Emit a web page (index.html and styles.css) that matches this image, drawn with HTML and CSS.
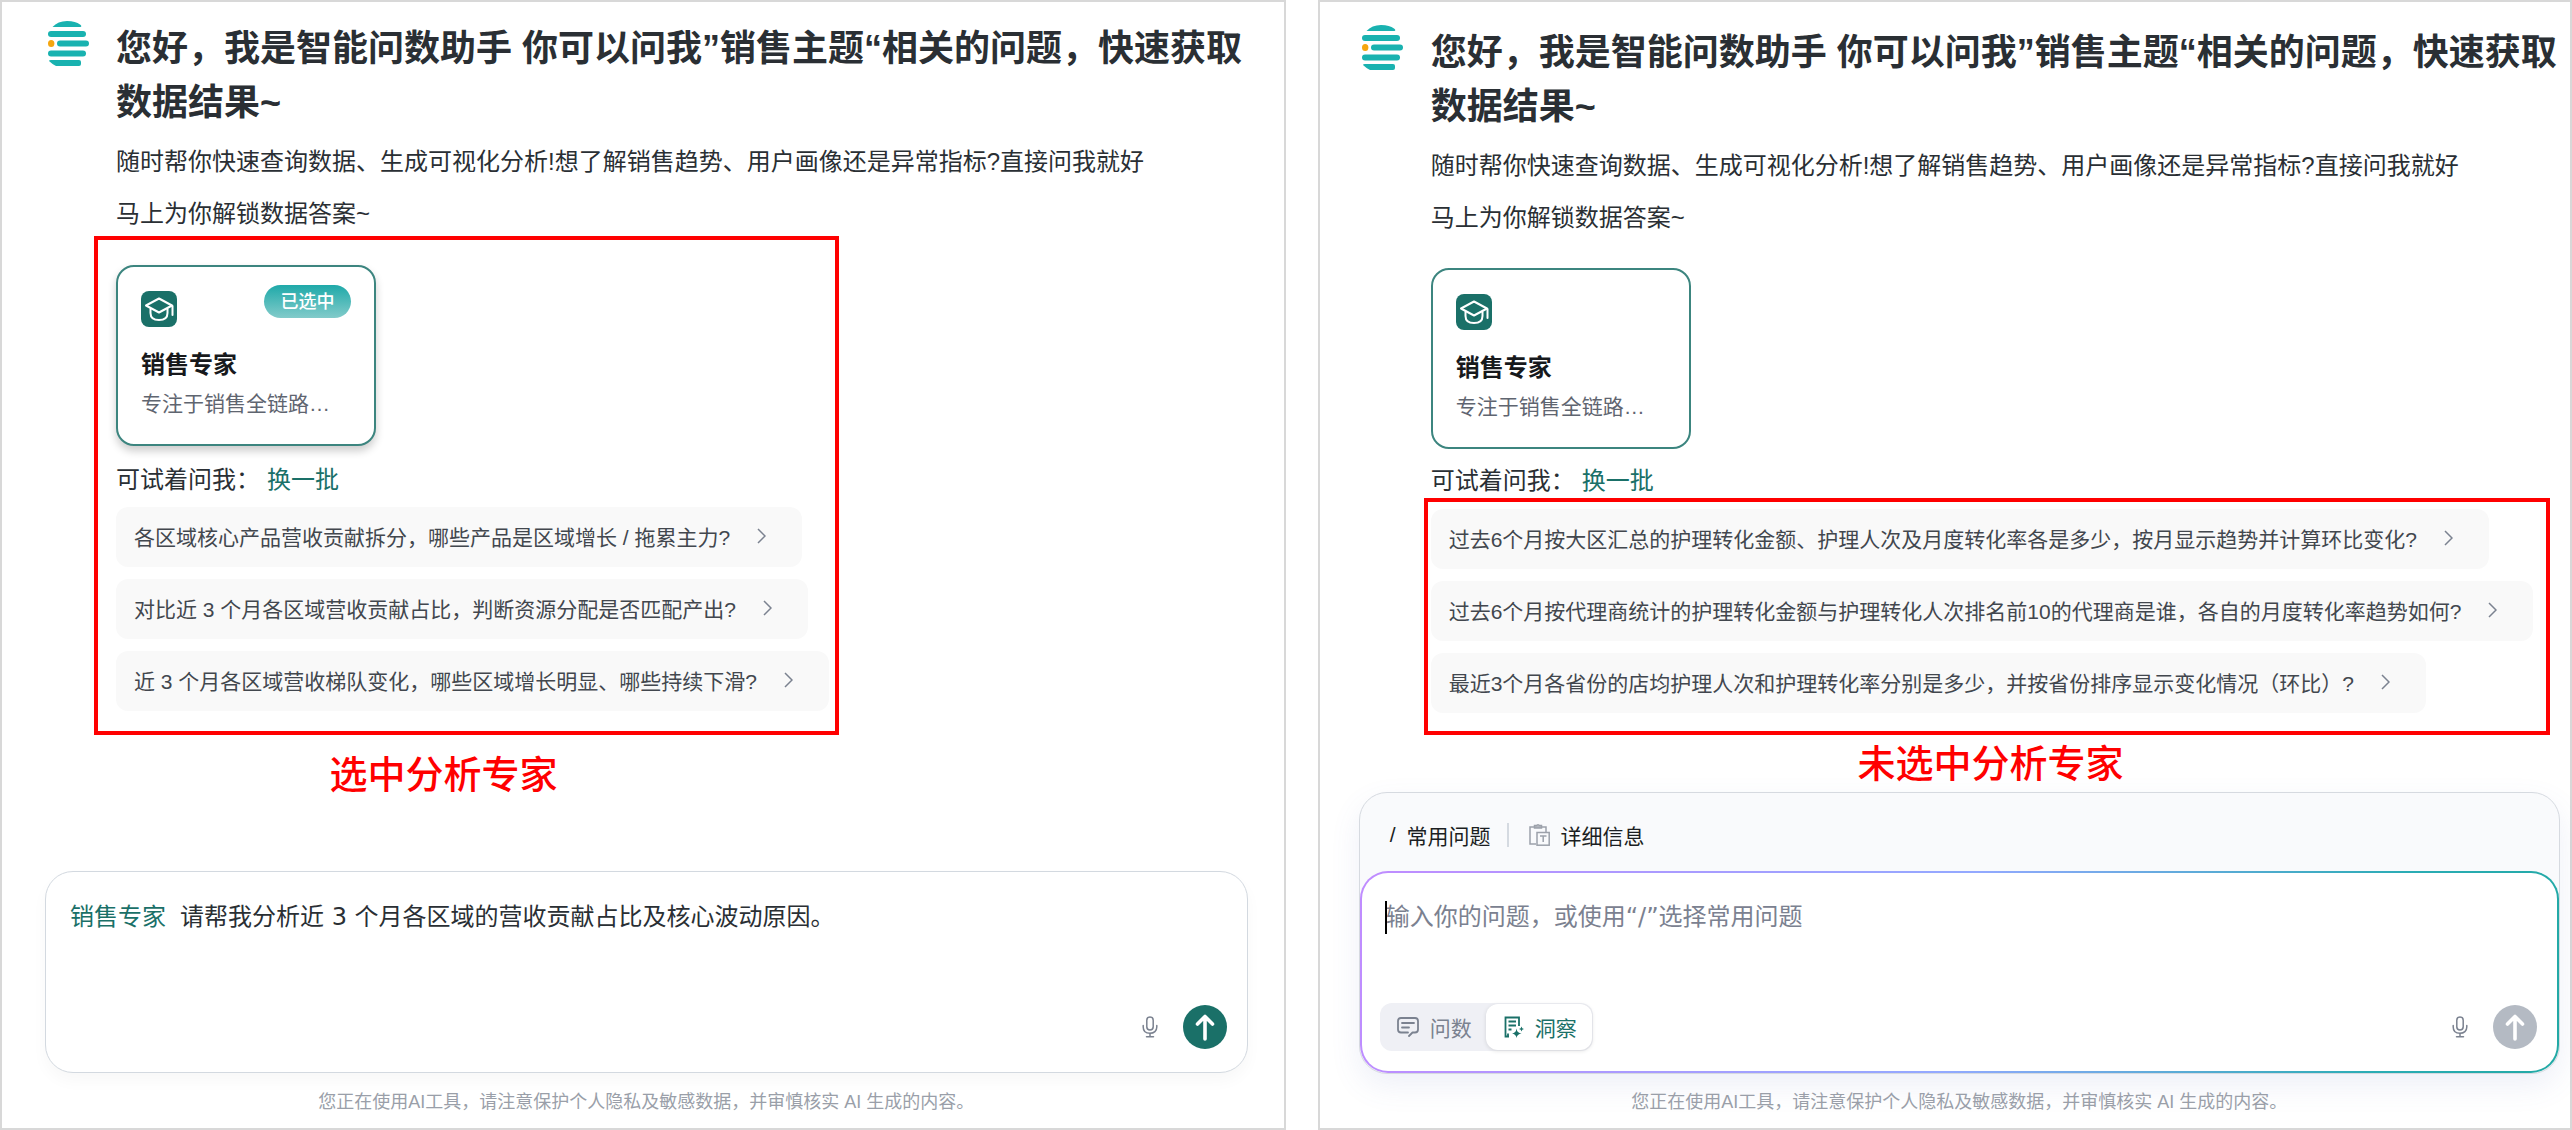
FILE: index.html
```html
<!DOCTYPE html>
<html lang="zh-CN">
    <head>
        <meta charset="utf-8">
        <title>智能问数助手</title>
        <link rel="stylesheet" href="styles.css">
    </head>
    <body>
        <!-- shared icons -->
        <svg class="sprite" aria-hidden="true">
            <symbol id="logo" viewBox="0 0 41 45">
                <g fill="#19b2b0">
                    <path d="M4.500 6 C8 2 13 0 19 0 C25 0 29 1.500 32 3.500 C34 5 33.500 6 32 6 Z"/>
                    <rect x="0" y="10" width="38" height="6" rx="3"/>
                    <rect x="9" y="19.500" width="32" height="6" rx="3"/>
                    <rect x="0" y="29.500" width="38" height="6" rx="3"/>
                    <path d="M3 39 H31 Q33 39 33 41 V43 Q33 45 31 45 H8 Q4 43 1 40 Q1 39 3 39 Z"/>
                </g>
                <ellipse cx="3.200" cy="22.500" rx="3.200" ry="3.500" fill="#f5a60f"/>
            </symbol>
            <symbol id="cap" viewBox="0 0 36 36">
                <rect width="36" height="36" rx="8" fill="#1a7068"/>
                <g fill="none" stroke="#fff" stroke-width="2" stroke-linejoin="round" stroke-linecap="round">
                    <path d="M18 7.500 L31 14.500 L18 21.500 L5 14.500 Z"/>
                    <path d="M9.500 18 V22 C9.500 27 13 29 18 29 C23 29 26.500 27 26.500 22 V18"/>
                    <path d="M31.500 15 V24"/>
                </g>
            </symbol>
            <symbol id="arrow" viewBox="0 0 9 16">
                <path d="M1 1 L8 8 L1 15" fill="none" stroke="#7b8290" stroke-width="1.500"/>
            </symbol>
            <symbol id="mic" viewBox="0 0 16 22">
                <g fill="none" stroke="#7b8290" stroke-width="1.500" stroke-linecap="round">
                    <rect x="4.800" y="1" width="6.400" height="13" rx="3.200"/>
                    <path d="M1.200 9.500 V11 C1.200 15 4 17.300 8 17.300 C12 17.300 14.800 15 14.800 11 V9.500"/>
                    <path d="M8 17.500 V20.500 M4.500 20.800 H11.500"/>
                </g>
            </symbol>
            <symbol id="up" viewBox="0 0 44 44">
                <path d="M22 34 V12 M14.500 19 L22 11.500 L29.500 19" fill="none" stroke="#fff" stroke-width="3.600" stroke-linecap="round" stroke-linejoin="round"/>
            </symbol>
            <symbol id="paste" viewBox="0 0 21 22">
                <g fill="none" stroke="#9ca1aa" stroke-width="1.500">
                    <path d="M7 20 H1 V3 H17 V8"/>
                    <path d="M5.500 3 V4 H12.500 V1.500 H10.500 L9 0.800 L7.500 1.500 H5.500 Z"/>
                    <rect x="8" y="8.500" width="12.200" height="12.700"/>
                    <path d="M11 12 H17.500 M14.200 12 V18"/>
                </g>
            </symbol>
            <symbol id="chat" viewBox="0 0 22 20">
                <path d="M11 15.500 H4 Q1 15.500 1 12.500 V4 Q1 1 4 1 H18 Q21 1 21 4 V12.500 Q21 15.500 18 15.500 H15.500 L12 19 M5 6 H17 M5 10.500 H12" fill="none" stroke="#7b8290" stroke-width="1.800" stroke-linecap="round" stroke-linejoin="round"/>
            </symbol>
            <symbol id="insight" viewBox="0 0 20 22">
                <path d="M5 20.500 H1.500 V1.500 H15 V10 M4.500 5.500 H12 M4.500 9.500 H12 M4.500 13.500 H7.500 M4 17.500 V20" fill="none" stroke="#1a7068" stroke-width="1.800"/>
                <path d="M12.500 12.500 Q13 17 17.500 17.500 Q13 18 12.500 22 Q12 18 8 17.500 Q12 17 12.500 12.500 Z M17.500 10.500 Q17.800 12.700 20 13 Q17.800 13.300 17.500 15.500 Q17.200 13.300 15 13 Q17.200 12.700 17.500 10.500 Z" fill="#1a7068"/>
            </symbol>
        </svg>

        <main class="board">
            <!-- expert selected -->
            <section class="panel panel-left">
                <div class="hero">
                    <svg class="logo"><use href="#logo"/></svg>
                    <div class="intro">
                        <h1>您好，我是智能问数助手 你可以问我”销售主题“相关的问题，快速获取数据结果~</h1>
                        <p>随时帮你快速查询数据、生成可视化分析!想了解销售趋势、用户画像还是异常指标?直接问我就好</p>
                        <p>马上为你解锁数据答案~</p>
                        <div class="marked">
                            <div class="red-box red-box-all">
                                <div class="card card-on">
                                    <div class="card-top">
                                        <svg class="cap"><use href="#cap"/></svg>
                                        <span class="badge">已选中</span>
                                    </div>
                                    <h2>销售专家</h2>
                                    <div class="desc">专注于销售全链路…</div>
                                </div>
                                <div class="try">可试着问我：<a href="#">换一批</a></div>
                                <div class="chips">
                                    <button class="chip">各区域核心产品营收贡献拆分，哪些产品是区域增长 / 拖累主力?<svg class="arrow"><use href="#arrow"/></svg></button>
                                    <button class="chip">对比近 3 个月各区域营收贡献占比，判断资源分配是否匹配产出?<svg class="arrow"><use href="#arrow"/></svg></button>
                                    <button class="chip">近 3 个月各区域营收梯队变化，哪些区域增长明显、哪些持续下滑?<svg class="arrow"><use href="#arrow"/></svg></button>
                                </div>
                            </div>
                            <div class="note note-left">选中分析专家</div>
                        </div>
                    </div>
                </div>
                <div class="composer">
                    <div class="entry">
                        <label class="tag" for="ask1">销售专家</label>
                        <textarea id="ask1" rows="2">请帮我分析近 3 个月各区域的营收贡献占比及核心波动原因。</textarea>
                    </div>
                    <div class="tools">
                        <button class="mic" aria-label="语音输入"><svg><use href="#mic"/></svg></button>
                        <button class="send" aria-label="发送"><svg><use href="#up"/></svg></button>
                    </div>
                </div>
                <footer>您正在使用AI工具，请注意保护个人隐私及敏感数据，并审慎核实 AI 生成的内容。</footer>
            </section>

            <!-- no expert selected -->
            <section class="panel panel-right">
                <div class="hero">
                    <svg class="logo"><use href="#logo"/></svg>
                    <div class="intro">
                        <h1>您好，我是智能问数助手 你可以问我”销售主题“相关的问题，快速获取数据结果~</h1>
                        <p>随时帮你快速查询数据、生成可视化分析!想了解销售趋势、用户画像还是异常指标?直接问我就好</p>
                        <p>马上为你解锁数据答案~</p>
                        <div class="card">
                            <div class="card-top">
                                <svg class="cap"><use href="#cap"/></svg>
                            </div>
                            <h2>销售专家</h2>
                            <div class="desc">专注于销售全链路…</div>
                        </div>
                        <div class="try">可试着问我：<a href="#">换一批</a></div>
                        <div class="marked">
                            <div class="red-box red-box-chips">
                                <div class="chips">
                                    <button class="chip">过去6个月按大区汇总的护理转化金额、护理人次及月度转化率各是多少，按月显示趋势并计算环比变化?<svg class="arrow"><use href="#arrow"/></svg></button>
                                    <button class="chip">过去6个月按代理商统计的护理转化金额与护理转化人次排名前10的代理商是谁，各自的月度转化率趋势如何?<svg class="arrow"><use href="#arrow"/></svg></button>
                                    <button class="chip">最近3个月各省份的店均护理人次和护理转化率分别是多少，并按省份排序显示变化情况（环比）?<svg class="arrow"><use href="#arrow"/></svg></button>
                                </div>
                            </div>
                            <div class="note">未选中分析专家</div>
                        </div>
                    </div>
                </div>
                <div class="shell">
                    <div class="quick">
                        <button class="quick-btn"><span>/</span>常用问题</button>
                        <i class="line"></i>
                        <button class="quick-btn"><svg class="paste"><use href="#paste"/></svg>详细信息</button>
                    </div>
                    <div class="composer composer-focus">
                        <div class="entry caret">
                            <textarea id="ask2" rows="2" aria-label="问题" placeholder="输入你的问题，或使用“/”选择常用问题"></textarea>
                        </div>
                        <div class="tools">
                            <div class="modes">
                                <button class="mode"><svg class="chat"><use href="#chat"/></svg>问数</button>
                                <button class="mode mode-on"><svg class="insight"><use href="#insight"/></svg>洞察</button>
                            </div>
                            <button class="mic" aria-label="语音输入"><svg><use href="#mic"/></svg></button>
                            <button class="send send-off" aria-label="发送"><svg><use href="#up"/></svg></button>
                        </div>
                    </div>
                </div>
                <footer>您正在使用AI工具，请注意保护个人隐私及敏感数据，并审慎核实 AI 生成的内容。</footer>
            </section>
        </main>
    </body>
</html>
```

FILE: styles.css
```css
* {
    box-sizing: border-box;
}
body {
    margin: 0;
    background: #fff;
    color: #2a2f34;
    font-family: "Liberation Sans", "Noto Sans CJK SC", sans-serif;
    font-size: 24px;
}
h1, h2, p {
    margin: 0;
}
button, textarea {
    font-family: inherit;
    border: 0;
    padding: 0;
    background: none;
}
button {
    cursor: pointer;
}
svg {
    display: block;
    flex: none;
}
.sprite {
    position: absolute;
    width: 0;
    height: 0;
}

.board {
    display: grid;
    grid-template-columns: 41fr 40fr;
    gap: 32px;
    min-height: 100vh;
}
.panel {
    display: flex;
    flex-direction: column;
    min-width: 0;
    border: 2px solid #d8d8d8;
}
.panel-left {
    padding: 19px 36px 12px 43px;
}
.panel-right {
    padding: 23px 10px 12px 39px;
}

/* greeting */
.hero {
    display: flex;
    gap: 27px;
    padding-left: 3px;
}
.panel-right .hero {
    gap: 28px;
    margin-right: -10px;
}
.logo {
    width: 41px;
    height: 45px;
}
.intro {
    flex: 1;
    min-width: 0;
}
h1 {
    padding-top: 1px;
    font-size: 36px;
    line-height: 54px;
    font-weight: 600;
    margin-bottom: 6px;
}
p {
    line-height: 52px;
}

/* expert card */
.card {
    width: 260px;
    height: 181px;
    padding: 18px 23px 0;
    border: 2px solid #3c857f;
    border-radius: 18px;
    background: #fff;
}
.card-on {
    box-shadow: 0 5px 9px rgba(0, 0, 0, 0.2);
}
.card-top {
    display: flex;
    justify-content: space-between;
    align-items: flex-start;
}
.cap {
    width: 36px;
    height: 36px;
    margin-top: 6px;
}
.badge {
    width: 87px;
    height: 33px;
    border-radius: 17px;
    background: linear-gradient(#1fa9a9, #82cbca);
    color: #fff;
    font-size: 18px;
    line-height: 35px;
    font-weight: 500;
    text-align: center;
}
.card h2 {
    margin-top: 20px;
    color: #17191c;
    font-size: 24px;
    line-height: 36px;
    font-weight: 600;
}
.desc {
    margin-top: 5px;
    color: #5f6570;
    font-size: 21px;
    line-height: 32px;
}
.panel-right .card {
    margin-top: 24px;
}
.try {
    margin-top: 10px;
    line-height: 48px;
}
.try a {
    margin-left: 7px;
    color: #1a7068;
    text-decoration: none;
}
.panel-right .try {
    line-height: 44px;
}

/* red marks */
.marked {
    width: fit-content;
}
.red-box {
    width: fit-content;
    border: 4px solid #f00;
}
.red-box-all {
    margin: -4px 0 0 -22px;
    padding: 25px 6px 20px 18px;
}
.red-box-all .chips {
    margin-top: 3px;
}
.red-box-chips {
    position: relative;
    margin: -5px 0 0 -7px;
    padding: 7px 13px 18px 3px;
}
.note {
    margin-top: 2px;
    color: #f00;
    font-size: 38px;
    line-height: 54px;
    font-weight: 500;
    text-align: center;
}
.note-left {
    margin-top: 13px;
    padding-right: 68px;
}

/* suggested questions */
.chips {
    display: flex;
    flex-direction: column;
    align-items: flex-start;
    gap: 12px;
}
.chip {
    display: flex;
    align-items: center;
    height: 60px;
    padding: 0 36px 3px 18px;
    border-radius: 12px;
    background: #f9f9f9;
    color: #42474e;
    font-size: 21px;
    white-space: nowrap;
}
.arrow {
    width: 9px;
    height: 16px;
    margin-left: 27px;
}

/* input area */
.composer {
    display: flex;
    flex-direction: column;
    justify-content: space-between;
    height: 202px;
    padding: 25px 20px 23px 24px;
    border: 1px solid #d3d9e0;
    border-radius: 28px;
    background: #fff;
    box-shadow: 0 8px 16px rgba(0, 0, 0, 0.03);
}
.panel-left .composer {
    margin-top: auto;
    margin-bottom: 1px;
}
.entry {
    display: flex;
    position: relative;
    line-height: 40px;
}
.tag {
    margin-right: 14px;
    color: #1a7068;
}
textarea {
    flex: 1;
    resize: none;
    outline: none;
    overflow: hidden;
    color: #2a2f34;
    font-family: "DejaVu Sans", "Noto Sans CJK SC", sans-serif;
    font-size: 24px;
    line-height: 40px;
}
textarea::placeholder {
    color: #7b8190;
}
.tools {
    display: flex;
    align-items: center;
    justify-content: flex-end;
    height: 44px;
}
.mic svg {
    width: 16px;
    height: 22px;
}
.send {
    width: 44px;
    height: 44px;
    margin-left: 25px;
    border-radius: 50%;
    background: #1a7068;
}
.send svg {
    width: 44px;
    height: 44px;
}
.send-off {
    background: #b4bac3;
}

.shell {
    margin-top: auto;
    border: 1px solid #d6dae0;
    border-radius: 28px;
    background: #f9fafc;
    box-shadow: 0 12px 30px rgba(90, 110, 190, 0.1);
}
.quick {
    display: flex;
    align-items: center;
    height: 78px;
    padding: 6px 30px 0;
}
.quick-btn {
    display: flex;
    align-items: center;
    gap: 11px;
    color: #1b1e22;
    font-size: 21px;
}
.line {
    width: 2px;
    height: 24px;
    margin: 0 20px 0 16px;
    background: #d5dae1;
}
.paste {
    width: 21px;
    height: 22px;
}
.composer-focus {
    padding: 24px 20px 22px 18px;
    border: 2px solid transparent;
    background: linear-gradient(#fff, #fff) padding-box, linear-gradient(100deg, #c08cff, #93a9ff 50%, #2aacb4 85%, #22a9a5) border-box;
    box-shadow: none;
}
.composer-focus textarea {
    margin-left: 6px;
}
/* text cursor drawn over the empty field */
.caret::before {
    content: "";
    position: absolute;
    left: 5px;
    top: 4px;
    width: 2px;
    height: 33px;
    background: #000;
}
.modes {
    display: flex;
    margin-right: auto;
    padding: 1px;
    border-radius: 12px;
    background: #eff0f5;
}
.mode {
    display: flex;
    align-items: center;
    gap: 11px;
    height: 46px;
    padding: 0 14px 0 16px;
    border-radius: 12px;
    color: #7b8290;
    font-size: 21px;
}
.mode-on {
    padding: 0 15px 0 18px;
    background: #fff;
    color: #1a7068;
    box-shadow: 0 1px 4px rgba(0, 0, 0, 0.12);
}
.chat {
    width: 22px;
    height: 20px;
}
.insight {
    width: 20px;
    height: 22px;
}

footer {
    margin-top: 14px;
    color: #9a9fa9;
    font-size: 18px;
    line-height: 28px;
    text-align: center;
}
```
